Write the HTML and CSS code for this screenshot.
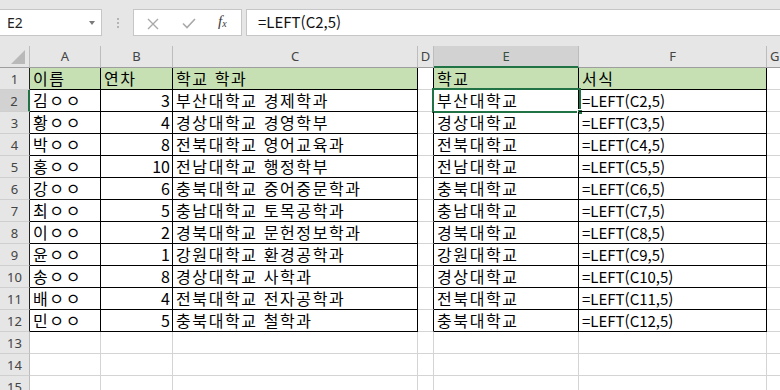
FILE: index.html
```html
<!DOCTYPE html>
<html lang="ko">
<head>
<meta charset="utf-8">
<link rel="stylesheet" href="styles.css">
</head>
<body>
<div class="app">
  <div class="fbar">
    <div class="namebox"><span class="nb-text">E2</span><span class="nb-arrow"></span></div>
    <div class="grip"><i></i><i></i><i></i></div>
    <div class="btns">
      <svg class="ic-x" width="12" height="12" viewBox="0 0 12 12"><path d="M1 1L11 11M11 1L1 11" stroke="#a9a9a9" stroke-width="1.4" fill="none"/></svg>
      <svg class="ic-ok" width="14" height="11" viewBox="0 0 14 11"><path d="M1 5.5L5 9.5L13 1" stroke="#a9a9a9" stroke-width="1.6" fill="none"/></svg>
      <span class="fx">f<sub>x</sub></span>
    </div>
    <div class="finput">=LEFT(C2,5)</div>
  </div>
  <div class="sheet">
    <div class="corner"><span class="tri"></span></div>
    <div class="ch">A</div><div class="ch">B</div><div class="ch">C</div><div class="ch">D</div><div class="ch sel">E</div><div class="ch">F</div><div class="ch last">G</div>
  </div>
  <div class="sheet" id="body"></div>
</div>
<script src="app.js"></script>
</body>
</html>
```

FILE: app.js
```js
var names = ["이름","김ㅇㅇ","황ㅇㅇ","박ㅇㅇ","홍ㅇㅇ","강ㅇㅇ","최ㅇㅇ","이ㅇㅇ","윤ㅇㅇ","송ㅇㅇ","배ㅇㅇ","민ㅇㅇ"];
var years = ["연차","3","4","8","10","6","5","2","1","8","4","5"];
var school = ["학교 학과","부산대학교 경제학과","경상대학교 경영학부","전북대학교 영어교육과","전남대학교 행정학부","충북대학교 중어중문학과","충남대학교 토목공학과","경북대학교 문헌정보학과","강원대학교 환경공학과","경상대학교 사학과","전북대학교 전자공학과","충북대학교 철학과"];
var body = document.getElementById("body");
var html = "";
for (var r = 1; r <= 15; r++) {
  var i = r - 1;
  var inT = r <= 12;
  var hd = r === 1 ? " hd" : "";
  html += '<div class="rh' + (r === 2 ? ' sel' : '') + (inT ? ' edge' : '') + '">' + r + '</div>';
  if (inT) {
    html += '<div class="c t' + hd + '">' + names[i] + '</div>';
    html += '<div class="c t' + hd + (r > 1 ? ' num' : '') + '">' + years[i] + '</div>';
    html += '<div class="c t' + hd + '">' + school[i] + '</div>';
    html += '<div class="c dcol"></div>';
    html += '<div class="c t' + hd + (r === 2 ? ' active' : '') + '">' + (r === 1 ? '학교' : school[i].slice(0, 5)) + (r === 2 ? '<span class="selbox"><span class="handle"></span></span>' : '') + '</div>';
    html += '<div class="c t lat' + hd + '">' + (r === 1 ? '<span class="ko">서식</span>' : '=LEFT(C' + r + ',5)') + '</div>';
    html += '<div class="c g"></div>';
  } else {
    html += '<div class="c"></div><div class="c"></div><div class="c"></div><div class="c"></div><div class="c"></div><div class="c"></div><div class="c g"></div>';
  }
}
body.innerHTML = html;
```

FILE: styles.css
```css
* { box-sizing: border-box; }
html, body { margin: 0; padding: 0; }
body { background: #fff; width: 780px; height: 390px; overflow: hidden; }
.app { width: 780px; font-family: "Noto Sans CJK KR", "Noto Sans", sans-serif; }

.fbar {
  height: 46px;
  background: #e6e6e6;
  display: flex;
  align-items: flex-start;
  padding-top: 9px;
}
.namebox {
  width: 102px; height: 27px;
  background: #fff;
  border: 1px solid #c6c6c6;
  border-left: none;
  display: flex; align-items: center;
  position: relative;
}
.nb-text { font-family: "Noto Sans", sans-serif; font-size: 14px; color: #222; margin-left: 7px; }
.nb-arrow {
  position: absolute; right: 6px; top: 11px;
  width: 0; height: 0;
  border-left: 3.5px solid transparent; border-right: 3.5px solid transparent;
  border-top: 4px solid #7a7a7a;
}
.grip { width: 31px; height: 27px; display: flex; flex-direction: column; align-items: center; justify-content: center; gap: 2px; }
.grip i { display: block; width: 2px; height: 2px; background: #b4b4b4; }
.btns {
  width: 109px; height: 27px;
  background: #fff; border: 1px solid #c6c6c6;
  display: flex; align-items: center;
  position: relative;
}
.ic-x { position: absolute; left: 13px; top: 8px; }
.ic-ok { position: absolute; left: 48px; top: 8px; }
.fx { position: absolute; left: 84px; top: 3px; font-family: "Liberation Serif", serif; font-style: italic; font-size: 15px; color: #3a3a3a; }
.fx sub { font-size: 10px; vertical-align: -1px; }
.finput {
  margin-left: 4px; flex: 1; height: 27px;
  background: #fff;
  border-top: 1px solid #c6c6c6; border-bottom: 1px solid #c6c6c6; border-left: 1px solid #c6c6c6;
  font-family: "Noto Sans CJK KR", sans-serif; font-size: 15px; color: #111;
  padding-left: 11px; line-height: 24px;
}

.sheet {
  display: grid;
  grid-template-columns: 30px 71px 72px 245px 16px 145px 188px 13px;
  grid-auto-rows: 22px;
}
.corner { background: #e6e6e6; border-right: 1px solid #bdbdbd; border-bottom: 1px solid #9e9e9e; position: relative; height: 22px; }
.tri {
  position: absolute; right: 4px; bottom: 3px;
  width: 0; height: 0;
  border-left: 14px solid transparent;
  border-bottom: 14px solid #b9b9b9;
}
.ch {
  height: 22px;
  background: #e6e6e6;
  border-right: 1px solid #bdbdbd; border-bottom: 1px solid #9e9e9e;
  text-align: center; font-family: "Noto Sans", sans-serif; font-size: 13px; color: #444; line-height: 21px;
}
.ch.sel { background: #d2d2d2; border-bottom: 2px solid #217346; color: #3a4f40; }
.ch.last { text-align: left; padding-left: 3px; border-right: none; }

.rh {
  background: #e6e6e6;
  border-right: 1px solid #bdbdbd; border-bottom: 1px solid #cfcfcf;
  text-align: center; font-family: "Noto Sans", sans-serif; font-size: 13px; color: #444; line-height: 22px;
}
.rh.edge { border-right-color: #222; }
.rh.sel { background: #d2d2d2; border-right: 2px solid #217346; }

.c {
  position: relative;
  border-right: 1px solid #d4d4d4; border-bottom: 1px solid #d4d4d4;
  font-size: 16px; color: #000; line-height: 21px;
  padding: 0 3px; white-space: nowrap; overflow: visible;
  letter-spacing: 1.6px;
}
.c.t { border-right-color: #000; border-bottom-color: #000; }
.c.hd { background: #c6e0b4; }
.c.num { text-align: right; padding-right: 2px; letter-spacing: 0; }
.c.dcol { border-right-color: #000; }
.c.g { border-right: none; }
.c.lat { font-size: 15px; letter-spacing: 0; }
.c.lat .ko { font-size: 16px; letter-spacing: 1.6px; }
.selbox {
  position: absolute; left: -2px; top: -2px; right: -3px; bottom: -2px;
  border: 2px solid #217346;
  pointer-events: none;
}
.handle {
  position: absolute; right: -4px; bottom: -4px;
  width: 6px; height: 6px; background: #217346; border: 1px solid #fff;
}
```
